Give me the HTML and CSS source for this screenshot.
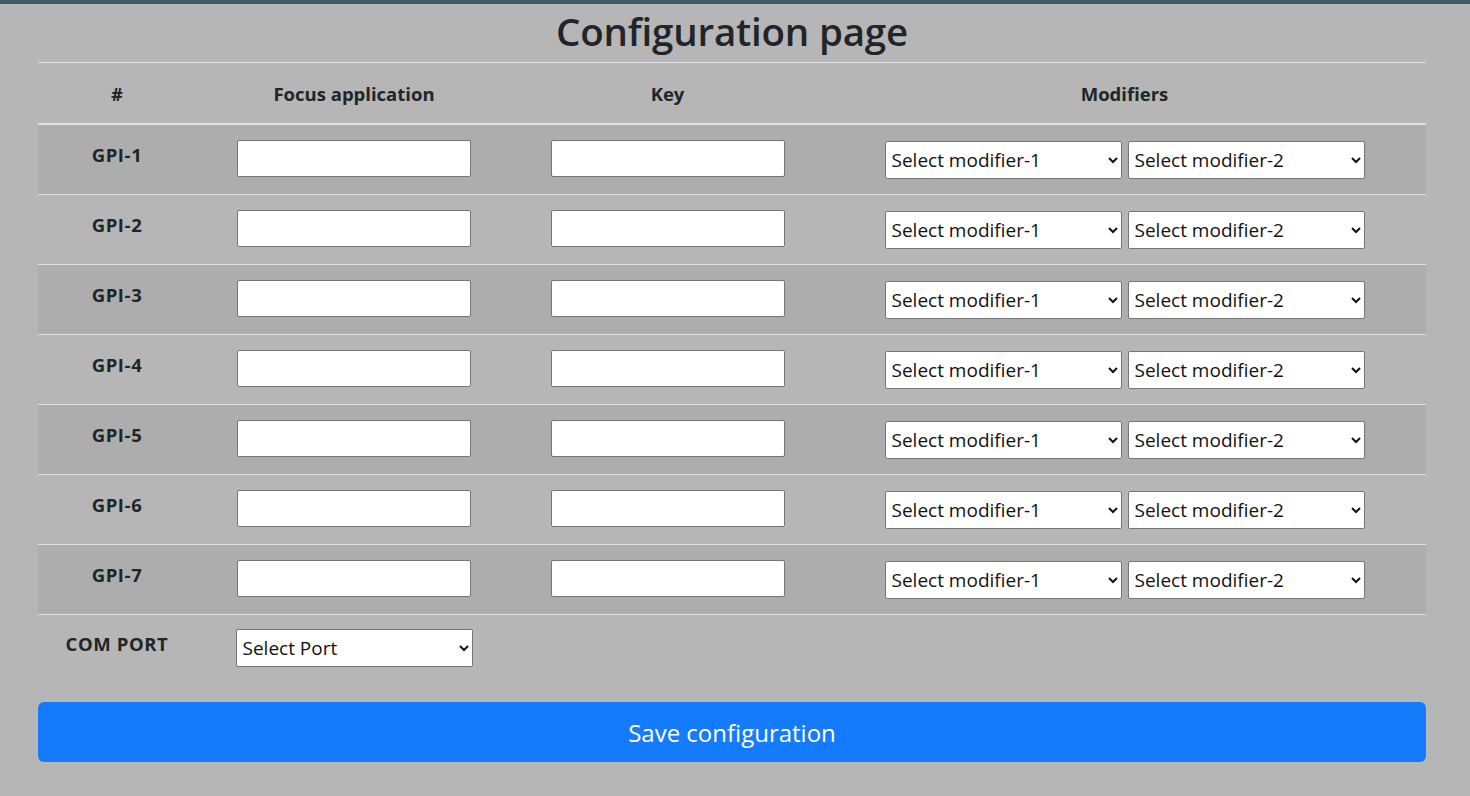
FILE: index.html
```html
<!DOCTYPE html>
<html>
<head>
<meta charset="utf-8">
<title>Configuration page</title>
<link rel="stylesheet" href="styles.css">
</head>
<body>
<div class="topbar"></div>
<main class="page">
  <h1 class="title">Configuration page</h1>
  <table class="config">
    <colgroup>
      <col class="c-num"><col class="c-app"><col class="c-key"><col class="c-mod">
    </colgroup>
    <thead>
      <tr><th>#</th><th>Focus application</th><th>Key</th><th>Modifiers</th></tr>
    </thead>
    <tbody>
      <tr><th>GPI-1</th><td><input class="field" type="text"></td><td><input class="field" type="text"></td><td><select class="sel"><option>Select modifier-1</option></select><select class="sel"><option>Select modifier-2</option></select></td></tr>
      <tr><th>GPI-2</th><td><input class="field" type="text"></td><td><input class="field" type="text"></td><td><select class="sel"><option>Select modifier-1</option></select><select class="sel"><option>Select modifier-2</option></select></td></tr>
      <tr><th>GPI-3</th><td><input class="field" type="text"></td><td><input class="field" type="text"></td><td><select class="sel"><option>Select modifier-1</option></select><select class="sel"><option>Select modifier-2</option></select></td></tr>
      <tr><th>GPI-4</th><td><input class="field" type="text"></td><td><input class="field" type="text"></td><td><select class="sel"><option>Select modifier-1</option></select><select class="sel"><option>Select modifier-2</option></select></td></tr>
      <tr><th>GPI-5</th><td><input class="field" type="text"></td><td><input class="field" type="text"></td><td><select class="sel"><option>Select modifier-1</option></select><select class="sel"><option>Select modifier-2</option></select></td></tr>
      <tr><th>GPI-6</th><td><input class="field" type="text"></td><td><input class="field" type="text"></td><td><select class="sel"><option>Select modifier-1</option></select><select class="sel"><option>Select modifier-2</option></select></td></tr>
      <tr><th>GPI-7</th><td><input class="field" type="text"></td><td><input class="field" type="text"></td><td><select class="sel"><option>Select modifier-1</option></select><select class="sel"><option>Select modifier-2</option></select></td></tr>
      <tr class="port"><th>COM PORT</th><td><select class="sel"><option>Select Port</option></select></td><td></td><td></td></tr>
    </tbody>
  </table>
  <button class="save" type="button">Save configuration</button>
</main>
</body>
</html>
```
FILE: styles.css
```css
html, body {
  margin: 0;
  padding: 0;
}
body {
  background: #b6b6b6;
  color: #212529;
  font-family: "Open Sans", "Noto Sans", sans-serif;
  font-size: 16px;
  min-height: 796px;
}
.topbar {
  height: 4px;
  background: #455a64;
}
.page {
  margin: 0 44px 0 38px;
}
.title {
  margin: 0;
  height: 58px;
  text-align: center;
  font-size: 38.5px;
  font-weight: 600;
  line-height: 54px;
  letter-spacing: -0.2px;
}
.config {
  width: 100%;
  border-collapse: collapse;
  table-layout: fixed;
  border-top: 1px solid #dee2e6;
}
.c-num { width: 158px; }
.c-app { width: 316px; }
.c-key { width: 311px; }
.c-mod { width: 603px; }
.config th, .config td {
  text-align: center;
  vertical-align: top;
  padding: 0;
}
.config thead th {
  height: 60px;
  vertical-align: middle;
  font-size: 18.5px;
  font-weight: 700;
  border-bottom: 2px solid #dee2e6;
}
.config tbody tr {
  height: 70px;
  border-bottom: 1px solid #dee2e6;
}
.config tbody tr:nth-child(odd) {
  background: #adadad;
}
.config tbody th {
  padding-top: 17px;
  font-size: 18.5px;
  font-weight: 700;
  letter-spacing: 0.6px;
}
.config tbody td {
  padding-top: 15px;
}
.config tbody tr.port {
  background: transparent;
  border-bottom: none;
  height: 88px;
}
.config tbody tr.port th {
  padding-top: 16px;
}
.config tbody tr.port td {
  padding-top: 13px;
}
.field {
  box-sizing: border-box;
  width: 234px;
  height: 37px;
  margin: 0;
  border: 1px solid #767676;
  border-radius: 2px;
  background: #fff;
  font: inherit;
}
.sel {
  box-sizing: border-box;
  width: 237px;
  height: 38px;
  margin: 1px 3px 0;
  padding: 0 2px;
  border: 1px solid #767676;
  border-radius: 2px;
  background: #fff;
  color: #111;
  font-family: "Open Sans", "Noto Sans", sans-serif;
  font-size: 19px;
  vertical-align: top;
}
.save {
  display: block;
  width: 100%;
  height: 60px;
  margin: 0;
  border: none;
  border-radius: 6px;
  background: #147cfc;
  color: #fff;
  font-family: "Open Sans", "Noto Sans", sans-serif;
  font-size: 24px;
}
```
